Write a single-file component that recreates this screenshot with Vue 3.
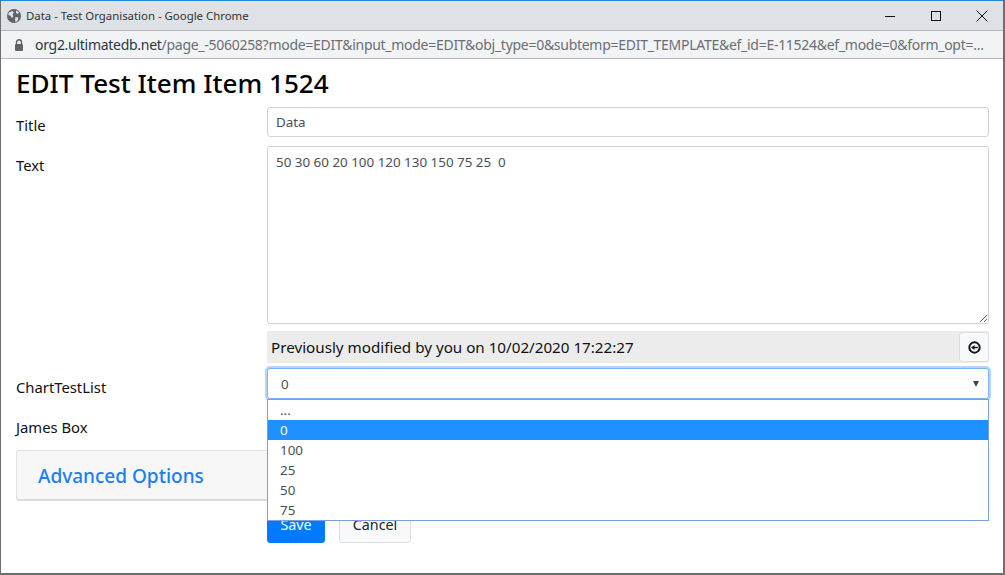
<script setup>
const options = ['...', '0', '100', '25', '50', '75']
const selected = '0'
const textValue = '50 30 60 20 100 120 130 150 75 25  0'
</script>

<template>
  <div class="window">
    <header class="titlebar">
      <div class="title-left">
        <svg class="globe" width="16" height="16" viewBox="0 0 16 16">
          <circle cx="8" cy="8" r="7" fill="#5f6368" />
          <path d="M3 4.5 6.5 3 8 4.5 6.5 6.5 7.5 8 6 10 4.5 8 2 6.5ZM9.5 9 12.5 9.5 11.5 13 9.5 14 9 11.5ZM10 2.5 13 4 12 6 10 5Z" fill="#dee1e6" />
        </svg>
        <span>Data - Test Organisation - Google Chrome</span>
      </div>
      <div class="controls">
        <svg width="12" height="12" viewBox="0 0 12 12"><path d="M1 6.5h10" stroke="#111" stroke-width="1" /></svg>
        <svg width="12" height="12" viewBox="0 0 12 12"><rect x="1.5" y="1.5" width="9" height="9" fill="none" stroke="#111" /></svg>
        <svg width="12" height="12" viewBox="0 0 12 12"><path d="M0.5 0.5l11 11M11.5 0.5l-11 11" stroke="#111" stroke-width="1" fill="none" /></svg>
      </div>
    </header>
    <div class="urlbar">
      <svg width="12" height="14" viewBox="0 0 12 14">
        <path d="M3.5 6V4.2a2.5 2.5 0 0 1 5 0V6" fill="none" stroke="#5f6368" stroke-width="1.4" />
        <rect x="2" y="6" width="8" height="7" rx="1" fill="#5f6368" />
      </svg>
      <span class="url"><b>org2.ultimatedb.net</b>/page_-5060258?mode=EDIT&amp;input_mode=EDIT&amp;obj_type=0&amp;subtemp=EDIT_TEMPLATE&amp;ef_id=E-11524&amp;ef_mode=0&amp;form_opt=...</span>
    </div>

    <main class="page">
      <h1>EDIT Test Item Item 1524</h1>

      <div class="row title-row">
        <label>Title</label>
        <input class="control" value="Data" />
      </div>

      <div class="row text-row">
        <label>Text</label>
        <div class="field">
          <textarea class="control area" :value="textValue"></textarea>
          <div class="modified">
            <span>Previously modified by you on 10/02/2020 17:22:27</span>
            <button class="restore" aria-label="Restore">
              <svg width="13" height="13" viewBox="0 0 12 12">
                <circle cx="6" cy="6" r="4.8" fill="none" stroke="#0d1420" stroke-width="1.8" />
                <path d="M2.8 6 6 3.6v1.7h3v1.4H6v1.7Z" fill="#0d1420" />
              </svg>
            </button>
          </div>
        </div>
      </div>

      <div class="row select-row">
        <label>ChartTestList</label>
        <div class="select-wrap">
          <div class="select">
            <span>{{ selected }}</span>
            <i class="caret"></i>
          </div>
          <ul class="menu">
            <li v-for="o in options" :key="o" :class="{ active: o === selected }">{{ o }}</li>
          </ul>
        </div>
      </div>

      <div class="row james-row">
        <label>James Box</label>
      </div>

      <section class="panel"><a>Advanced Options</a></section>

      <div class="actions">
        <button class="btn save">Save</button>
        <button class="btn cancel">Cancel</button>
      </div>
    </main>
  </div>
</template>

<style>
html, body { margin: 0; padding: 0; background: #fff; overflow: hidden; }
</style>

<style scoped>
* { box-sizing: border-box; }
.window {
  width: 1005px;
  height: 575px;
  display: flex;
  flex-direction: column;
  border-top: 1px solid #1a88e0;
  border-left: 1px solid #6f6f6f;
  border-right: 2px solid #6f6f6f;
  border-bottom: 2px solid #6f6f6f;
  font-family: "Noto Sans", "Open Sans", sans-serif;
  color: #111;
  overflow: hidden;
}
.titlebar {
  height: 30px;
  flex: none;
  background: #dee1e6;
  border-bottom: 1px solid #b4b6b9;
  display: flex;
  align-items: center;
  justify-content: space-between;
  font-size: 11.4px;
  color: #333;
}
.title-left { display: flex; align-items: center; gap: 4px; padding-left: 5px; }
.controls { display: flex; gap: 34px; padding-right: 15px; align-items: center; }
.urlbar {
  height: 28px;
  flex: none;
  background: #f1f3f4;
  border-bottom: 1px solid #b4b6b9;
  display: flex;
  align-items: center;
  gap: 10px;
  padding-left: 12px;
}
.url { font-size: 14px; color: #6a6f75; white-space: nowrap; letter-spacing: -0.02em; }
.url b { font-weight: 400; color: #2c3744; }
.page { flex: 1; padding: 0 14px 0 15px; background: #fff; position: relative; }
h1 { margin: 6px 0 6px; font-size: 26.1px; line-height: 36px; font-weight: 500; color: #000; }
.row { display: grid; grid-template-columns: 251px 722px; }
label { font-size: 14.8px; line-height: 20px; color: #111; padding-top: 8px; }
.control {
  display: block;
  width: 100%;
  height: 30px;
  border: 1px solid #ced4da;
  border-radius: 3px;
  padding: 0 8px;
  font: 13.4px "Noto Sans", sans-serif;
  color: #495057;
  background: #fff;
  outline: none;
}
.area { height: 178px; padding: 6px 8px; margin-top: 0; resize: vertical; }
.text-row { margin-top: 9px; }
.text-row label { padding-top: 9px; }
.modified {
  margin-top: 7px;
  height: 32px;
  background: #ececec;
  display: flex;
  align-items: center;
  justify-content: space-between;
  padding-left: 4px;
  font-size: 15.2px;
  color: #111;
}
.restore {
  width: 30px;
  height: 30px;
  margin-right: 0;
  padding: 0;
  border: 1px solid #ddd;
  border-radius: 3px;
  background: #f8f9fa;
  display: flex;
  align-items: center;
  justify-content: center;
}
.select-row { margin-top: 5px; position: relative; z-index: 2; }
.select-row label { padding-top: 9px; }
.select-wrap { position: relative; }
.select {
  height: 31px;
  border: 1px solid #7db4f5;
  border-radius: 3px;
  box-shadow: 0 0 0 2px #b3d5ff;
  background: #fff;
  display: flex;
  align-items: center;
  justify-content: space-between;
  padding: 0 9px 0 13px;
  font-size: 13.4px;
  color: #495057;
}
.caret {
  width: 0;
  height: 0;
  border-left: 3px solid transparent;
  border-right: 3px solid transparent;
  border-top: 6px solid #444;
}
.menu {
  position: absolute;
  left: 0;
  right: 0;
  top: 31px;
  margin: 0;
  padding: 0;
  list-style: none;
  background: #fff;
  border: 1px solid #7a9fdc;
  height: 122px;
  font-size: 13.4px;
  color: #495057;
  overflow: hidden;
}
.menu li { height: 20px; line-height: 20px; padding-left: 12px; }
.menu li.active { background: #1e90ff; color: #fff; }
.james-row { height: 40px; margin-top: 8px; }
.james-row label { padding-top: 10px; }
.panel {
  margin-top: 3px;
  height: 51px;
  width: 973px;
  background: #f7f7f7;
  border: 1px solid #e2e2e2;
  border-bottom: 2px solid #dedede;
  border-radius: 3px;
  display: flex;
  align-items: center;
  padding: 2px 0 0 21px;
}
.panel a { font-size: 19px; font-weight: 500; color: #1a7ef5; }
.actions { margin-top: 4px; margin-left: 251px; display: flex; gap: 14px; }
.btn {
  height: 38px;
  border-radius: 3px;
  font: 14.3px "Noto Sans", sans-serif;
  padding: 0;
}
.save { width: 58px; background: #007bff; border: 1px solid #007bff; color: #fff; }
.cancel { width: 72px; background: #f8f9fa; border: 1px solid #ddd; color: #212529; }
</style>
